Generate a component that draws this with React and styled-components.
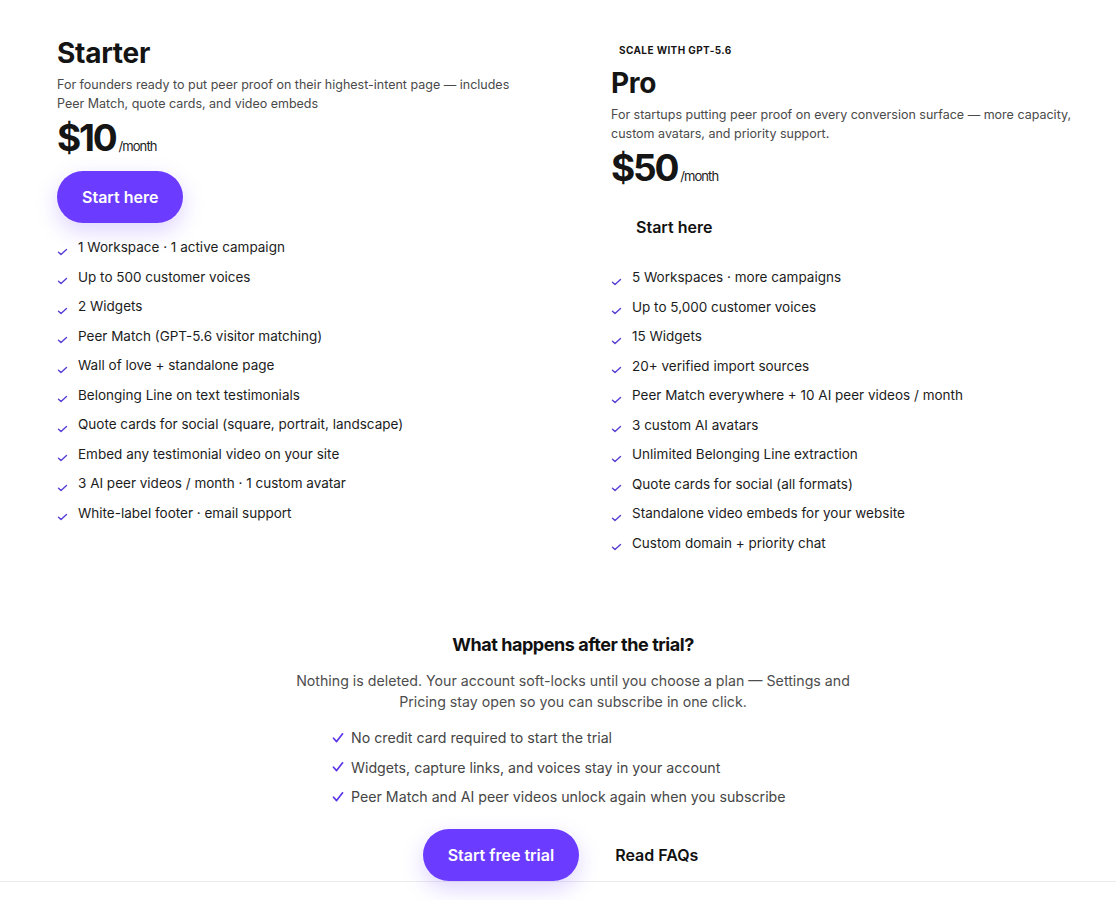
import React from "react";
import styled, { createGlobalStyle } from "styled-components";

const Global = createGlobalStyle`
  html, body { margin: 0; padding: 0; background: #fff; }
  body {
    font-family: Inter, "Noto Sans", Arial, sans-serif;
    color: #111;
    -webkit-font-smoothing: antialiased;
  }
  * { box-sizing: border-box; }
`;

const Page = styled.div`
  width: 1116px;
  padding-top: 35px;
`;

const Plans = styled.section`
  display: grid;
  grid-template-columns: 474px 1fr;
  column-gap: 80px;
  padding: 0 36px 0 57px;
  align-items: start;
`;

const Card = styled.div`
  display: flex;
  flex-direction: column;
  align-items: flex-start;
`;

const Badge = styled.span`
  display: inline-block;
  padding: 9px 8px;
  font-size: 10px;
  line-height: 12px;
  font-weight: 700;
  letter-spacing: 0.04em;
  text-transform: uppercase;
  color: #151515;
`;

const PlanName = styled.h2`
  margin: 0;
  font-size: 28px;
  line-height: 36px;
  font-weight: 700;
  letter-spacing: -0.01em;
  color: #141414;
`;

const Blurb = styled.p`
  margin: 4px 0 0;
  font-size: 12.5px;
  line-height: 19px;
  color: #4a4a4a;
`;

const PriceRow = styled.div`
  display: flex;
  align-items: baseline;
  gap: 3px;
  margin-top: 5px;
  height: 40px;
`;

const Amount = styled.span`
  font-size: 37px;
  line-height: 40px;
  font-weight: 700;
  letter-spacing: -0.06em;
  color: #151515;
`;

const Per = styled.span`
  font-size: 13px;
  letter-spacing: -0.07em;
  color: #222;
`;

const Button = styled.button`
  margin-top: ${(p) => p.$mt || 0}px;
  height: 52px;
  padding: 0 25px;
  border: 0;
  border-radius: 999px;
  font-family: inherit;
  font-size: 16px;
  font-weight: 600;
  cursor: pointer;
  background: ${(p) => (p.$ghost ? "transparent" : "#6b3cff")};
  color: ${(p) => (p.$ghost ? "#111" : "#fff")};
  box-shadow: ${(p) =>
    p.$ghost ? "none" : "0 8px 22px rgba(107, 60, 255, 0.22)"};
`;

const Features = styled.ul`
  list-style: none;
  margin: 10px 0 0;
  padding: 0;
`;

const Feature = styled.li`
  display: flex;
  align-items: center;
  gap: 10px;
  padding: 5px 0;
  font-size: 13.5px;
  line-height: 19.5px;
  color: #1c1c1c;
`;

const SmallTick = styled.svg`
  width: 11px;
  height: 8px;
  flex: none;
  margin-top: 8px;
`;

const Tick = () => (
  <SmallTick viewBox="0 0 11 8" fill="none">
    <path
      d="M1.5 4.2 L4 6.6 L9.5 1.4"
      stroke="#5a3ed6"
      strokeWidth="1.4"
      strokeLinecap="round"
      strokeLinejoin="round"
    />
  </SmallTick>
);

const Trial = styled.section`
  display: flex;
  flex-direction: column;
  align-items: center;
  margin-top: 75px;
  padding-left: 30px;
`;

const TrialTitle = styled.h3`
  margin: 0;
  font-size: 18px;
  line-height: 24px;
  font-weight: 700;
  letter-spacing: -0.025em;
  color: #111;
`;

const TrialText = styled.p`
  margin: 13px 0 0;
  width: 570px;
  text-align: center;
  font-size: 14.2px;
  line-height: 21px;
  color: #4d4d4d;
`;

const TrialList = styled.ul`
  list-style: none;
  margin: 11px 0 0;
  padding: 0;
  width: 482px;
`;

const TrialItem = styled.li`
  display: flex;
  align-items: center;
  gap: 7px;
  padding: 5px 0;
  font-size: 14.2px;
  line-height: 19.5px;
  color: #454545;
`;

const BigTickSvg = styled.svg`
  width: 12px;
  height: 12px;
  flex: none;
`;

const BigTick = () => (
  <BigTickSvg viewBox="0 0 12 12" fill="none">
    <path
      d="M1.5 6.2 L4.6 9.6 L10.6 1.8"
      stroke="#5b35e8"
      strokeWidth="1.7"
      strokeLinecap="round"
      strokeLinejoin="round"
    />
  </BigTickSvg>
);

const Actions = styled.div`
  display: flex;
  align-items: center;
  gap: 11px;
  margin-top: 17px;
`;

const Footer = styled.footer`
  border-top: 1px solid #ececec;
  height: 60px;
`;

const plans = [
  {
    name: "Starter",
    blurb:
      "For founders ready to put peer proof on their highest-intent page — includes Peer Match, quote cards, and video embeds",
    price: "$10",
    ghost: false,
    features: [
      "1 Workspace · 1 active campaign",
      "Up to 500 customer voices",
      "2 Widgets",
      "Peer Match (GPT-5.6 visitor matching)",
      "Wall of love + standalone page",
      "Belonging Line on text testimonials",
      "Quote cards for social (square, portrait, landscape)",
      "Embed any testimonial video on your site",
      "3 AI peer videos / month · 1 custom avatar",
      "White-label footer · email support",
    ],
  },
  {
    name: "Pro",
    badge: "Scale with GPT-5.6",
    blurb:
      "For startups putting peer proof on every conversion surface — more capacity, custom avatars, and priority support.",
    price: "$50",
    ghost: true,
    features: [
      "5 Workspaces · more campaigns",
      "Up to 5,000 customer voices",
      "15 Widgets",
      "20+ verified import sources",
      "Peer Match everywhere + 10 AI peer videos / month",
      "3 custom AI avatars",
      "Unlimited Belonging Line extraction",
      "Quote cards for social (all formats)",
      "Standalone video embeds for your website",
      "Custom domain + priority chat",
    ],
  },
];

const trialPoints = [
  "No credit card required to start the trial",
  "Widgets, capture links, and voices stay in your account",
  "Peer Match and AI peer videos unlock again when you subscribe",
];

export default function App() {
  return (
    <Page>
      <Global />
      <Plans>
        {plans.map((plan) => (
          <Card key={plan.name}>
            {plan.badge && <Badge>{plan.badge}</Badge>}
            <PlanName>{plan.name}</PlanName>
            <Blurb>{plan.blurb}</Blurb>
            <PriceRow>
              <Amount>{plan.price}</Amount>
              <Per>/month</Per>
            </PriceRow>
            <Button $mt={13} $ghost={plan.ghost}>
              Start here
            </Button>
            <Features>
              {plan.features.map((f) => (
                <Feature key={f}>
                  <Tick />
                  <span>{f}</span>
                </Feature>
              ))}
            </Features>
          </Card>
        ))}
      </Plans>
      <Trial>
        <TrialTitle>What happens after the trial?</TrialTitle>
        <TrialText>
          Nothing is deleted. Your account soft-locks until you choose a plan —
          Settings and Pricing stay open so you can subscribe in one click.
        </TrialText>
        <TrialList>
          {trialPoints.map((t) => (
            <TrialItem key={t}>
              <BigTick />
              <span>{t}</span>
            </TrialItem>
          ))}
        </TrialList>
        <Actions>
          <Button>Start free trial</Button>
          <Button $ghost>Read FAQs</Button>
        </Actions>
      </Trial>
      <Footer />
    </Page>
  );
}
